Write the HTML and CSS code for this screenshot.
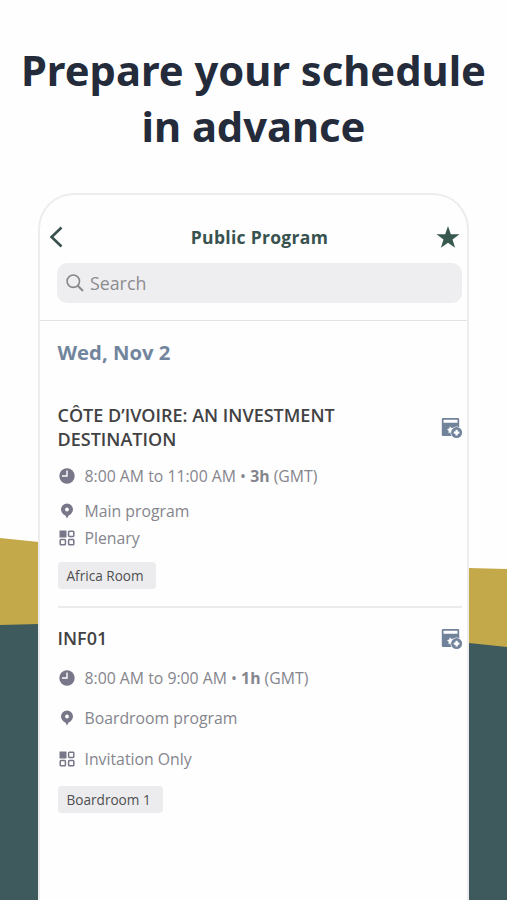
FILE: index.html
```html
<!DOCTYPE html>
<html lang="en">
<head>
<meta charset="utf-8">
<title>Public Program</title>
<link rel="stylesheet" href="styles.css">
</head>
<body>
<svg width="0" height="0" class="sprite" aria-hidden="true">
  <symbol id="clock" viewBox="0 0 16 16"><circle cx="8" cy="8" r="7.700" fill="#777789"/><path d="M8 2.600V8H3" fill="none" stroke="#fff" stroke-width="1.400"/></symbol>
  <symbol id="pin" viewBox="0 0 16 16"><path fill="#777789" fill-rule="evenodd" d="M8 .5a6 6 0 0 0-6 6c0 3 2.400 5.200 4.400 6.100L8 15.500l1.600-2.900C11.600 11.700 14 9.500 14 6.500a6 6 0 0 0-6-6zm0 4.100a1.900 1.900 0 1 1 0 3.800 1.900 1.900 0 0 1 0-3.800z"/></symbol>
  <symbol id="grid" viewBox="0 0 16 16"><path fill="#777789" d="M.5.500h7v7h-7z"/><g fill="none" stroke="#777789" stroke-width="1.500"><rect x="9.600" y="1.200" width="5.200" height="5.200" rx=".8"/><rect x="1.200" y="9.600" width="5.200" height="5.200" rx=".8"/><rect x="9.600" y="9.600" width="5.200" height="5.200" rx=".8"/></g></symbol>
  <symbol id="add" viewBox="0 0 22 22"><path fill="#71839a" fill-rule="evenodd" d="M2 1h15a1.200 1.200 0 0 1 1.200 1.200V19H2A1.200 1.200 0 0 1 .8 17.800V2.200A1.200 1.200 0 0 1 2 1zm.5 1.700v3.100h14V2.700z"/><path fill="#fff" d="M9 9.300l1.200 1.800 2-.3-.6 2 1.400 1.700-3.100.4-2.400 1.400.2-2.500-1.700-1.600 2.200-.6z"/><circle cx="15.600" cy="15.600" r="6.200" fill="#fff"/><circle cx="15.600" cy="15.600" r="5.500" fill="#71839a"/><path d="M15.600 12.800v5.600M12.800 15.600h5.600" stroke="#fff" stroke-width="2.200"/></symbol>
</svg>
<svg class="backdrop" viewBox="0 0 507 900" aria-hidden="true">
  <path fill="#c4a94a" d="M0 538L39 542L469 568L507 569V660H0z"/>
  <path fill="#3e5a5c" d="M0 625L39 624L469 643L507 647V900H0z"/>
</svg>
<main class="page">
  <h1 class="headline">Prepare your schedule<br>in advance</h1>
  <section class="phone">
    <header class="top">
      <div class="bar">
        <svg class="back" viewBox="0 0 14 22"><path d="M12.500 1.500L2.600 11l9.900 9.500" fill="none" stroke="#38504e" stroke-width="2.600"/></svg>
        <h2 class="title">Public Program</h2>
        <svg class="star" viewBox="0 0 24 22"><path fill="#36584f" d="M12 0l2.800 8.300H23.500l-7 5.200 2.600 8.300L12 16.800l-7.100 5 2.600-8.300-7-5.200h8.700z"/></svg>
      </div>
      <div class="search">
        <svg class="lens" viewBox="0 0 18 18"><g fill="none" stroke="#88888b" stroke-width="1.600"><circle cx="7.300" cy="7.200" r="6.200"/><path d="M11.800 11.700L17 17" stroke-width="2"/></g></svg>
        <span>Search</span>
      </div>
    </header>
    <div class="list">
      <h3 class="date">Wed, Nov 2</h3>
      <article class="event first">
        <div class="head"><h4 class="name">CÔTE D’IVOIRE: AN INVESTMENT<br>DESTINATION</h4><svg class="add"><use href="#add"/></svg></div>
        <p class="row time"><svg><use href="#clock"/></svg><span>8:00 AM to 11:00 AM • <b>3h</b> (GMT)</span></p>
        <p class="row place"><svg><use href="#pin"/></svg><span>Main program</span></p>
        <p class="row kind"><svg><use href="#grid"/></svg><span>Plenary</span></p>
        <span class="tag">Africa Room</span>
      </article>
      <article class="event second">
        <div class="head"><h4 class="name">INF01</h4><svg class="add"><use href="#add"/></svg></div>
        <p class="row time"><svg><use href="#clock"/></svg><span>8:00 AM to 9:00 AM • <b>1h</b> (GMT)</span></p>
        <p class="row place"><svg><use href="#pin"/></svg><span>Boardroom program</span></p>
        <p class="row kind"><svg><use href="#grid"/></svg><span>Invitation Only</span></p>
        <span class="tag">Boardroom 1</span>
      </article>
    </div>
  </section>
</main>
</body>
</html>
```
FILE: styles.css
```css
* { box-sizing: border-box; }
body { margin: 0; background: #fefefe; font-family: "Open Sans", "Noto Sans", sans-serif; overflow: hidden; }
h1, h2, h3, h4, p { margin: 0; }
svg { display: block; flex: none; }
.sprite { position: absolute; }
.backdrop { position: absolute; left: 0; top: 0; width: 507px; height: 900px; }
.page { position: relative; height: 900px; display: flex; flex-direction: column; overflow: hidden; }
.headline { height: 193px; padding-top: 42px; text-align: center; font: 700 41.700px/56px "Noto Sans", sans-serif; color: #242b3b; white-space: nowrap; }
.phone { width: 431px; margin-left: 38px; flex: 1; background: #fefefe; border: 2px solid #ededef; border-bottom: 0; border-radius: 36px 36px 0 0; }
.top { height: 126px; border-bottom: 1px solid #e2e2e4; }
.bar { height: 68px; padding: 16px 7px 0 9px; display: flex; align-items: center; justify-content: space-between; }
.back { width: 14px; height: 22px; }
.title { font-size: 17.500px; line-height: 24px; letter-spacing: 0.300px; color: #38524f; padding-left: 20px; }
.star { width: 24px; height: 22px; }
.search { height: 40px; margin: 0 5px 0 17px; padding-left: 9px; border-radius: 10px; background: #eeeef0; display: flex; align-items: center; gap: 6px; font-size: 17.800px; color: #8b8b8e; }
.lens { width: 18px; height: 18px; }
.list { padding: 0 5px 0 17.500px; }
.date { padding-top: 17px; font-size: 20.300px; line-height: 28px; color: #71859d; }
.head { display: flex; justify-content: space-between; align-items: center; }
.name { font-weight: 600; font-size: 18px; line-height: 24px; color: #424244; white-space: nowrap; }
.add { width: 22px; height: 22px; margin: 2px -1px 0 0; }
.row { display: flex; align-items: center; gap: 10px; height: 26px; font-size: 15.800px; line-height: 26px; color: #85858d; }
.row svg { width: 16px; height: 16px; margin-left: 1px; }
.first { margin-top: 37px; height: 205px; border-bottom: 2px solid #ebebed; }
.first .time { margin-top: 12px; }
.first .place { margin-top: 9px; }
.first .kind { margin-top: 1px; }
.tag { display: inline-block; height: 27px; margin-top: 11px; padding: 0 12px 0 9px; border-radius: 4px; background: #ececee; font-size: 13.600px; line-height: 28px; color: #4f4f51; vertical-align: top; }
.second { padding-top: 18px; }
.second .time { margin-top: 15px; }
.second .place { margin-top: 14px; }
.second .kind { margin-top: 15px; }
.second .tag { margin-top: 14px; }
```
